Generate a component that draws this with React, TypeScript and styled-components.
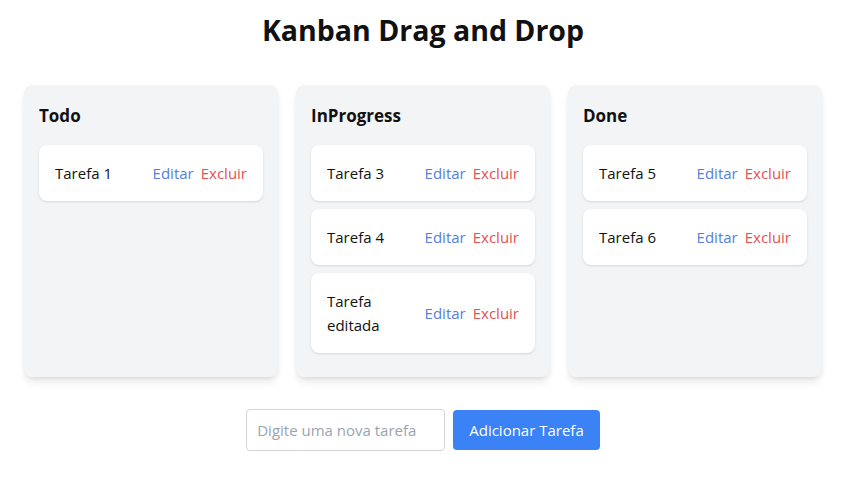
import styled, { createGlobalStyle } from "styled-components";

const GlobalStyle = createGlobalStyle`
  body {
    margin: 0;
    background: #fff;
    font-family: "Open Sans", "Noto Sans", sans-serif;
    color: #111;
  }
`;

const Page = styled.div`
  padding: 12px 28px 0 24px;
  display: flex;
  flex-direction: column;
  align-items: center;
`;

const Title = styled.h1`
  margin: 0 0 37px;
  font-size: 28.5px;
  line-height: 36px;
  font-weight: 700;
`;

const Board = styled.div`
  display: grid;
  grid-template-columns: repeat(3, 254px);
  column-gap: 18px;
  align-items: stretch;
`;

const Column = styled.div`
  padding: 17px 15px 16px;
  background: #f3f4f6;
  border-radius: 8px;
  box-shadow: 0 6px 10px -2px rgba(0, 0, 0, 0.1), 0 2px 5px -2px rgba(0, 0, 0, 0.1);
`;

const ColumnTitle = styled.h2`
  margin: 0 0 15px;
  font-size: 17px;
  line-height: 28px;
  font-weight: 700;
`;

const Card = styled.div`
  display: flex;
  align-items: center;
  justify-content: space-between;
  margin-bottom: 8px;
  padding: 16px;
  background: #fff;
  border-radius: 8px;
  box-shadow: 0 1px 3px rgba(0, 0, 0, 0.1), 0 1px 2px -1px rgba(0, 0, 0, 0.1);
`;

const CardText = styled.span`
  font-size: 15px;
  line-height: 24px;
  max-width: 90px;
`;

const Actions = styled.div`
  display: flex;
  gap: 7px;
`;

const ActionLink = styled.button<{ $tone: "edit" | "delete" }>`
  padding: 0;
  border: none;
  background: none;
  font-family: inherit;
  font-size: 15px;
  line-height: 24px;
  cursor: pointer;
  color: ${(p) => (p.$tone === "edit" ? "#5580dc" : "#df5252")};
`;

const Form = styled.div`
  display: flex;
  gap: 8px;
  margin-top: 32px;
`;

const Input = styled.input`
  width: 199px;
  height: 42px;
  box-sizing: border-box;
  padding: 8px 10px;
  border: 1px solid #d1d5db;
  border-radius: 4px;
  font-family: inherit;
  font-size: 15px;
  color: #111;
  outline: none;

  &::placeholder {
    color: #9ca3af;
  }
`;

const AddButton = styled.button`
  align-self: center;
  height: 40px;
  padding: 0 16px;
  border: none;
  border-radius: 4px;
  background: #3b82f6;
  color: #fff;
  font-family: inherit;
  font-size: 15px;
  cursor: pointer;
`;

const columns = [
  { title: "Todo", tasks: ["Tarefa 1"] },
  { title: "InProgress", tasks: ["Tarefa 3", "Tarefa 4", "Tarefa editada"] },
  { title: "Done", tasks: ["Tarefa 5", "Tarefa 6"] },
];

export default function App() {
  return (
    <>
      <GlobalStyle />
      <Page>
        <Title>Kanban Drag and Drop</Title>
        <Board>
          {columns.map((col) => (
            <Column key={col.title}>
              <ColumnTitle>{col.title}</ColumnTitle>
              {col.tasks.map((task) => (
                <Card key={task}>
                  <CardText>{task}</CardText>
                  <Actions>
                    <ActionLink $tone="edit">Editar</ActionLink>
                    <ActionLink $tone="delete">Excluir</ActionLink>
                  </Actions>
                </Card>
              ))}
            </Column>
          ))}
        </Board>
        <Form>
          <Input placeholder="Digite uma nova tarefa" />
          <AddButton>Adicionar Tarefa</AddButton>
        </Form>
      </Page>
    </>
  );
}
